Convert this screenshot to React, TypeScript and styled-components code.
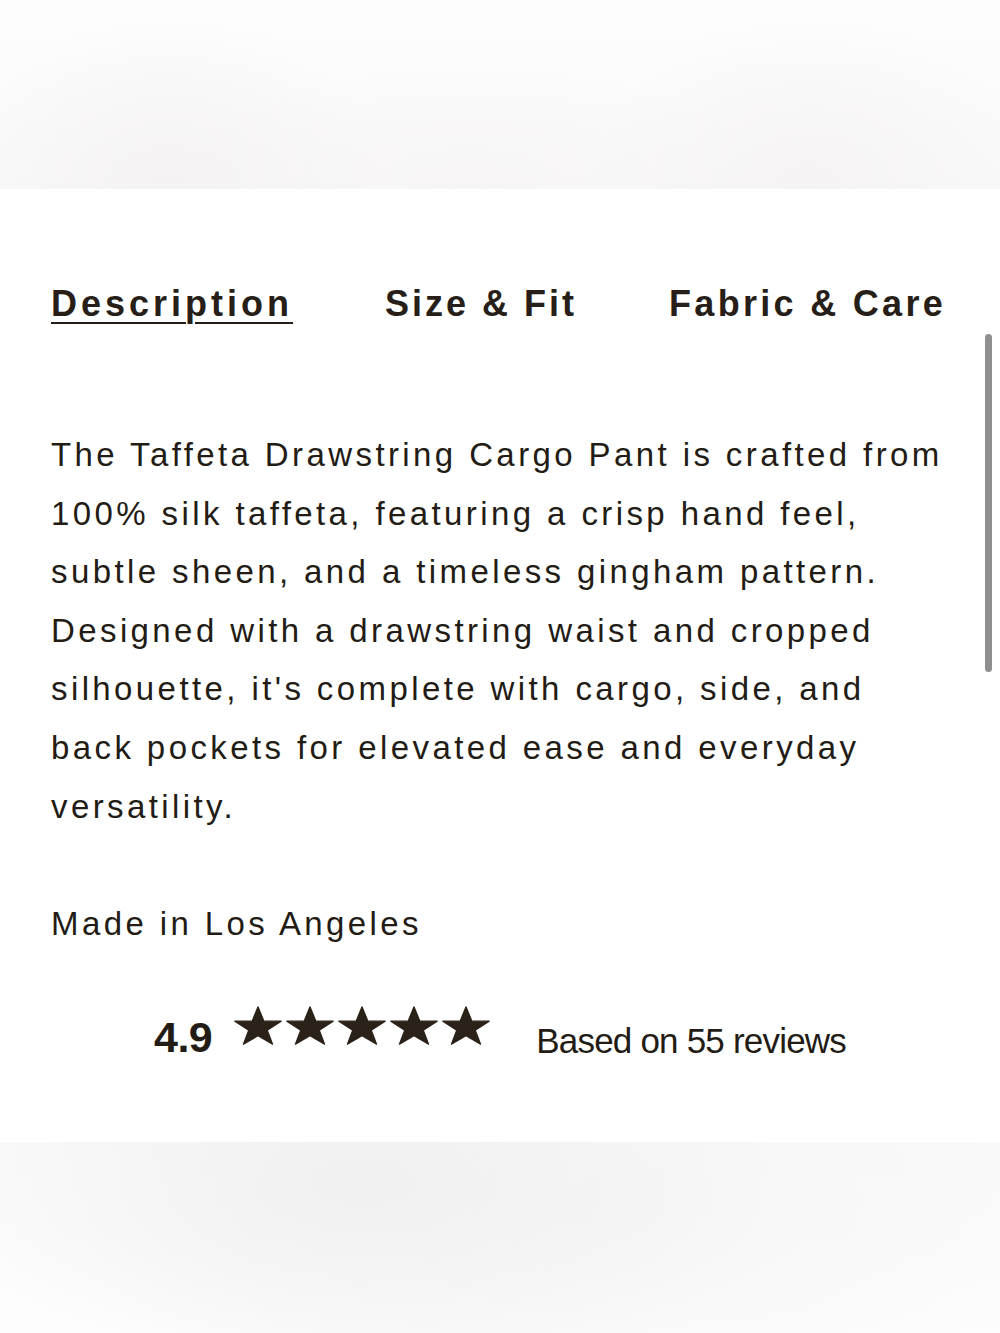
import React from "react";
import styled, { createGlobalStyle } from "styled-components";

const Global = createGlobalStyle`
  html, body { margin: 0; padding: 0; background: #ffffff; }
  body { font-family: "Liberation Sans", Arial, sans-serif; color: #231c15; }
`;

const Page = styled.div`
  position: relative;
  width: 1000px;
  min-height: 1333px;
  background: #ffffff;
  overflow: hidden;
`;

const TopBand = styled.div`
  height: 189px;
  background:
    radial-gradient(ellipse 220px 170px at 170px 189px, #f4f2f2 0%, rgba(244, 242, 242, 0) 100%),
    radial-gradient(ellipse 230px 170px at 810px 189px, #f5f3f3 0%, rgba(245, 243, 243, 0) 100%),
    radial-gradient(ellipse 300px 130px at 470px 189px, #f7f5f5 0%, rgba(247, 245, 245, 0) 100%),
    linear-gradient(180deg, #fefdfd 0%, #faf9f9 100%);
`;

const BottomBand = styled.div`
  height: 191px;
  margin-top: 83px;
  background:
    radial-gradient(ellipse 420px 200px at 360px 40px, #f1f0f0 0%, rgba(241, 240, 240, 0) 100%),
    radial-gradient(ellipse 520px 240px at 600px 60px, #f7f6f6 0%, rgba(247, 246, 246, 0) 100%),
    linear-gradient(180deg, #fbfafa 0%, #fdfdfd 100%);
`;

const Content = styled.section`
  padding: 0 0 0 51px;
`;

const Tabs = styled.nav`
  display: flex;
  gap: 92px;
  margin-top: 93px;
`;

const Tab = styled.span<{ $active?: boolean; $spacing: number }>`
  font-family: "Liberation Sans", Arial, sans-serif;
  font-weight: 700;
  font-size: 36px;
  line-height: 44px;
  letter-spacing: ${(p) => p.$spacing}px;
  color: #261e17;
  text-decoration: ${(p) => (p.$active ? "underline" : "none")};
  text-decoration-thickness: 2px;
  text-underline-offset: 6px;
`;

const Body = styled.div`
  margin-top: 100px;
  width: 895px;
`;

const Para = styled.p`
  margin: 0 0 58.6px 0;
  font-family: "Liberation Sans", Arial, sans-serif;
  font-size: 33px;
  line-height: 58.6px;
  letter-spacing: 3.4px;
  color: #231c15;
  &:last-child { margin-bottom: 0; }
`;

const RatingRow = styled.div`
  display: flex;
  justify-content: center;
  align-items: flex-end;
  margin-top: 53px;
`;

const Score = styled.span`
  font-family: "Liberation Sans", Arial, sans-serif;
  font-weight: 700;
  font-size: 43px;
  line-height: 43px;
  letter-spacing: -0.5px;
  color: #231c15;
`;

const Stars = styled.div`
  display: flex;
  gap: 4px;
  margin: 0 46px 14px 22px;
`;

const ReviewCount = styled.span`
  font-family: "Liberation Sans", Arial, sans-serif;
  font-size: 35px;
  line-height: 35px;
  letter-spacing: -0.8px;
  color: #231c15;
  margin-bottom: 1px;
`;

const Scrollbar = styled.div`
  position: absolute;
  top: 334px;
  right: 8px;
  width: 7px;
  height: 338px;
  border-radius: 4px;
  background: #8f8f8f;
`;

const Star = () => (
  <svg width="48" height="39" viewBox="0 0 48 39" aria-hidden="true">
    <polygon
      points="24,0.8 29.9,15.2 47.2,15.2 33.3,24.2 38.6,38.2 24,29.8 9.4,38.2 14.7,24.2 0.8,15.2 18.1,15.2"
      fill="#2a2118"
      stroke="#2a2118"
      strokeWidth="1.2"
      strokeLinejoin="round"
    />
  </svg>
);

export default function App() {
  return (
    <Page>
      <Global />
      <TopBand />
      <Content>
        <Tabs>
          <Tab $active $spacing={4}>Description</Tab>
          <Tab $spacing={3}>Size &amp; Fit</Tab>
          <Tab $spacing={3.3}>Fabric &amp; Care</Tab>
        </Tabs>
        <Body>
          <Para>
            The Taffeta Drawstring Cargo Pant is crafted from 100% silk taffeta, featuring a crisp hand feel,
            subtle sheen, and a timeless gingham pattern. Designed with a drawstring waist and cropped
            silhouette, it's complete with cargo, side, and back pockets for elevated ease and everyday
            versatility.
          </Para>
          <Para>Made in Los Angeles</Para>
        </Body>
      </Content>
      <RatingRow>
        <Score>4.9</Score>
        <Stars>
          <Star />
          <Star />
          <Star />
          <Star />
          <Star />
        </Stars>
        <ReviewCount>Based on 55 reviews</ReviewCount>
      </RatingRow>
      <BottomBand />
      <Scrollbar />
    </Page>
  );
}
